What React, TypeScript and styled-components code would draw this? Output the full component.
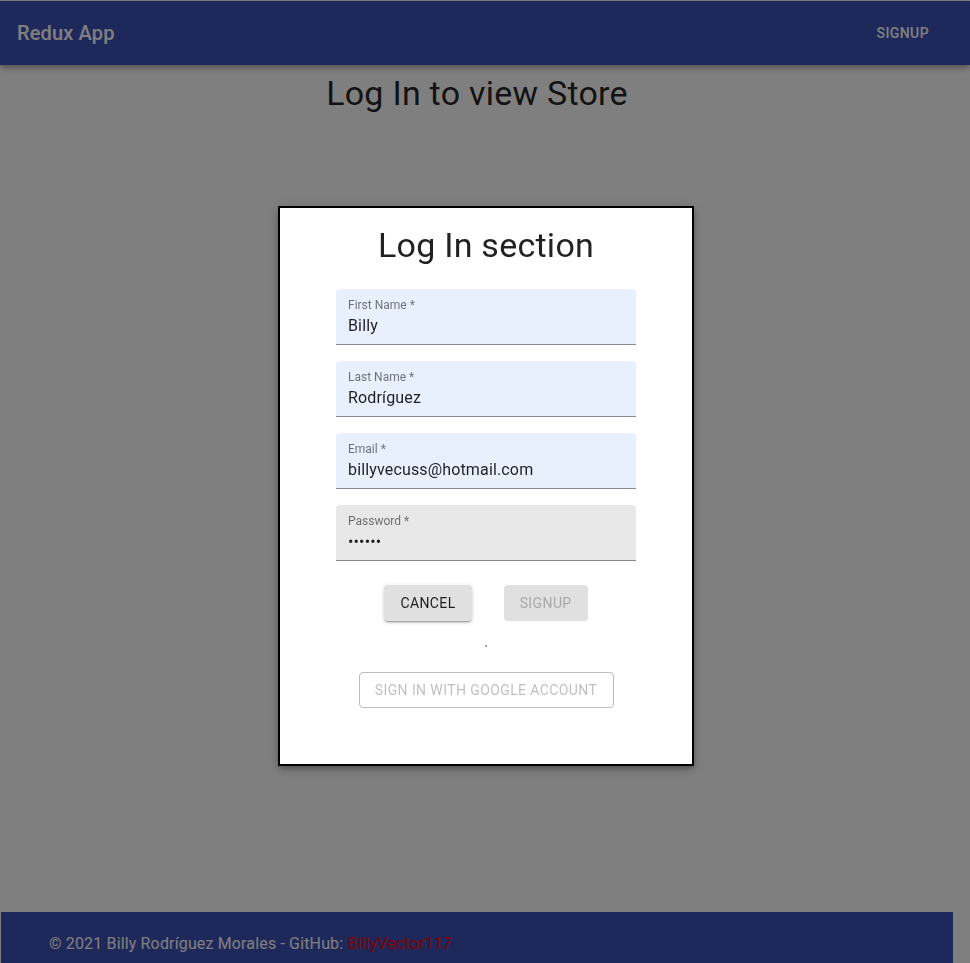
import styled, { createGlobalStyle } from "styled-components";

/*--------------------------
    Styled
--------------------------*/
const GlobalReset = createGlobalStyle`
    html, body {
        margin: 0;
        padding: 0;
        background: #fff;
        font-family: Roboto, "Liberation Sans", sans-serif;
    }
    body {
        padding-top: 1px;
    }
    * {
        box-sizing: border-box;
    }
`;

const AppBar = styled.header`
    display: flex;
    align-items: center;
    justify-content: space-between;
    height: 64px;
    padding: 0 24px 0 17px;
    background-color: #3f51b5;
    color: #fff;
    box-shadow: 0 2px 4px -1px rgba(0, 0, 0, 0.2), 0 4px 5px 0 rgba(0, 0, 0, 0.14),
        0 1px 10px 0 rgba(0, 0, 0, 0.12);
`;
const Brand = styled.div`
    font-size: 20px;
    font-weight: 500;
    letter-spacing: 0.0075em;
`;
const NavButton = styled.div`
    padding: 6px 17px;
    font-size: 14px;
    font-weight: 500;
    letter-spacing: 0.02857em;
    text-transform: uppercase;
`;

const Container = styled.div`
    width: 952px;
    margin-left: 1px;
`;
const Main = styled.main`
    min-height: 847px;
    padding-top: 8px;
`;
const PageTitle = styled.h1`
    margin: 0;
    font-size: 34px;
    font-weight: 400;
    line-height: 1.235;
    letter-spacing: 0.00735em;
    text-align: center;
    color: rgba(0, 0, 0, 0.87);
`;

const Footer = styled.footer`
    height: 64px;
    padding: 20px 48px;
    background-color: #3f51b5;
    color: #fff;
    font-size: 16px;
    line-height: 24px;
    letter-spacing: 0.00938em;
`;
const FooterLink = styled.a`
    color: #ff0000;
    text-decoration: none;
`;

const Backdrop = styled.div`
    position: fixed;
    inset: 0;
    display: flex;
    align-items: flex-start;
    justify-content: center;
    padding-top: 206px;
    background-color: rgba(0, 0, 0, 0.5);
`;
const Dialog = styled.div`
    display: flex;
    flex-direction: column;
    align-items: center;
    width: 416px;
    height: 560px;
    margin-left: 2px;
    padding: 16px 0 0 0;
    border: 2px solid #000;
    background-color: #fff;
    box-shadow: 0 3px 5px -1px rgba(0, 0, 0, 0.2), 0 5px 8px 0 rgba(0, 0, 0, 0.14),
        0 1px 14px 0 rgba(0, 0, 0, 0.12);
`;
const DialogTitle = styled.h2`
    margin: 0;
    font-size: 34px;
    font-weight: 400;
    line-height: 42px;
    letter-spacing: 0.00735em;
    color: rgba(0, 0, 0, 0.87);
`;
const Form = styled.form`
    display: flex;
    flex-direction: column;
    gap: 16px;
    margin-top: 23px;
`;
const Field = styled.label<{ $autofill?: boolean }>`
    position: relative;
    display: block;
    width: 300px;
    height: 56px;
    border-radius: 4px 4px 0 0;
    border-bottom: 1px solid rgba(0, 0, 0, 0.42);
    background-color: ${(p) => (p.$autofill ? "#e8f0fe" : "rgba(0, 0, 0, 0.09)")};
`;
const FieldLabel = styled.span`
    position: absolute;
    top: 10px;
    left: 12px;
    font-size: 12px;
    line-height: 12px;
    color: rgba(0, 0, 0, 0.54);
`;
const FieldInput = styled.input`
    width: 100%;
    height: 55px;
    padding: 25px 12px 7px;
    border: 0;
    outline: none;
    background: transparent;
    font-family: Roboto, "Liberation Sans", sans-serif;
    font-size: 16px;
    color: rgba(0, 0, 0, 0.87);
    letter-spacing: 0.00938em;
`;
const ButtonRow = styled.div`
    display: flex;
    gap: 32px;
    margin-top: 24px;
`;
const ActionButton = styled.button<{ $disabled?: boolean }>`
    height: 36px;
    padding: 6px 16px;
    border: 0;
    border-radius: 4px;
    background-color: ${(p) => (p.$disabled ? "rgba(0, 0, 0, 0.12)" : "#e0e0e0")};
    color: ${(p) => (p.$disabled ? "rgba(0, 0, 0, 0.26)" : "rgba(0, 0, 0, 0.87)")};
    box-shadow: ${(p) =>
        p.$disabled
            ? "none"
            : "0 3px 1px -2px rgba(0,0,0,0.2), 0 2px 2px 0 rgba(0,0,0,0.14), 0 1px 5px 0 rgba(0,0,0,0.12)"};
    font-family: Roboto, "Liberation Sans", sans-serif;
    font-size: 14px;
    font-weight: 400;
    letter-spacing: 0.02857em;
    text-transform: uppercase;
`;
const Spinner = styled.div`
    width: 2px;
    height: 2px;
    margin-top: 24px;
    border-radius: 50%;
    background-color: rgba(0, 0, 0, 0.5);
`;
const GoogleButton = styled.button`
    width: 255px;
    height: 36px;
    margin-top: 25px;
    border: 1px solid rgba(0, 0, 0, 0.26);
    border-radius: 4px;
    background: transparent;
    color: rgba(0, 0, 0, 0.26);
    font-family: Roboto, "Liberation Sans", sans-serif;
    font-size: 14px;
    font-weight: 400;
    letter-spacing: 0.02857em;
    text-transform: uppercase;
`;

/*--------------------------
    Main
--------------------------*/
const fields = [
    { label: "First Name", value: "Billy", type: "text", autofill: true },
    { label: "Last Name", value: "Rodríguez", type: "text", autofill: true },
    { label: "Email", value: "billyvecuss@hotmail.com", type: "email", autofill: true },
    { label: "Password", value: "123456", type: "password", autofill: false },
];

const App = () => {
    return (
        <>
            <GlobalReset />
            <AppBar>
                <Brand>Redux App</Brand>
                <NavButton>Signup</NavButton>
            </AppBar>

            <Container>
                <Main>
                    <PageTitle>Log In to view Store</PageTitle>
                </Main>
                <Footer>
                    © 2021 Billy Rodríguez Morales - GitHub:{" "}
                    <FooterLink href="#">BillyVector117</FooterLink>
                </Footer>
            </Container>

            <Backdrop>
                <Dialog>
                    <DialogTitle>Log In section</DialogTitle>
                    <Form onSubmit={(e) => e.preventDefault()}>
                        {fields.map((f) => (
                            <Field key={f.label} $autofill={f.autofill}>
                                <FieldLabel>{f.label} *</FieldLabel>
                                <FieldInput type={f.type} defaultValue={f.value} readOnly />
                            </Field>
                        ))}
                    </Form>
                    <ButtonRow>
                        <ActionButton>Cancel</ActionButton>
                        <ActionButton $disabled disabled>
                            Signup
                        </ActionButton>
                    </ButtonRow>
                    <Spinner />
                    <GoogleButton disabled>Sign in with Google Account</GoogleButton>
                </Dialog>
            </Backdrop>
        </>
    );
};

export default App;
